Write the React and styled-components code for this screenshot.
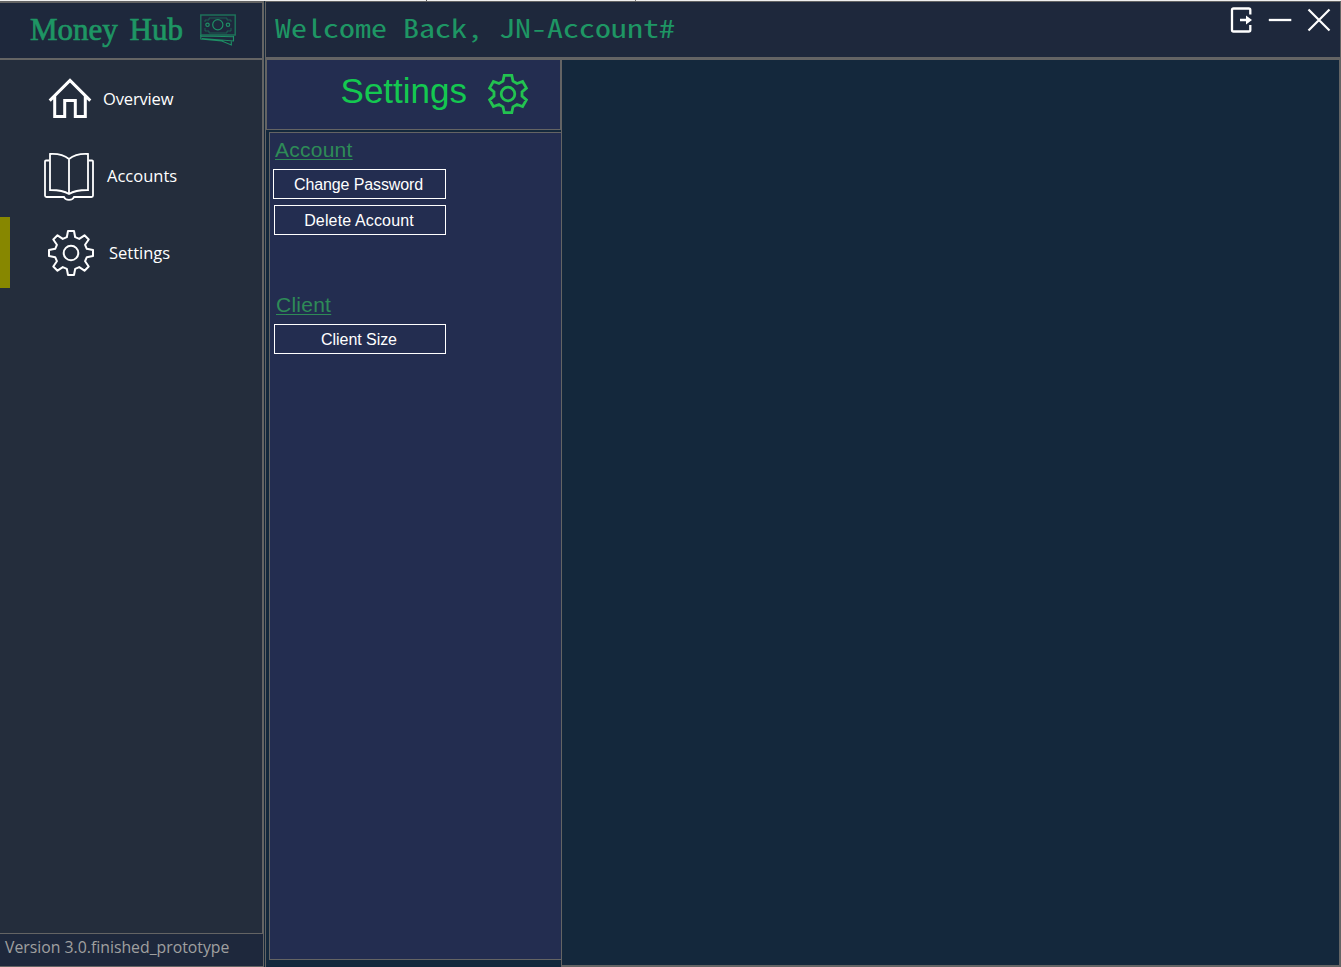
import React from "react";
import styled, { createGlobalStyle } from "styled-components";

const line = "#646464";

const GlobalStyle = createGlobalStyle`
  * { box-sizing: border-box; }
  body { margin: 0; background: #14283c; overflow: hidden; }
  svg { display: block; flex: none; }
`;

const Window = styled.div`
  width: 1341px;
  height: 967px;
  display: flex;
  padding-top: 1px;
  background:
    linear-gradient(#555, #555) 426px 0 / 1px 1px no-repeat,
    linear-gradient(#777, #777) 635px 0 / 1px 1px no-repeat,
    linear-gradient(#f0f0f0, #f0f0f0) 0 0 / 100% 1px no-repeat,
    #14283c;
`;

const Sidebar = styled.aside`
  width: 264px;
  flex: none;
  display: flex;
  flex-direction: column;
  background: #1e283c;
`;

const Brand = styled.header`
  height: 59px;
  display: flex;
  align-items: flex-start;
  padding: 11px 0 0 30px;
  background: #1e283c;
  border: 2px solid ${line};
  border-left: 0;
  color: #1e9664;
`;

const BrandName = styled.span`
  width: 170px;
  margin-top: -1px;
  font: 31px/34px "Liberation Serif", serif;
  word-spacing: 4px;
  white-space: nowrap;
  -webkit-text-stroke: 0.7px currentColor;
`;

const Nav = styled.nav`
  flex: 1;
  padding-top: 3px;
  background: #242d3c;
  border-right: 2px solid ${line};
`;

const NavItem = styled.a`
  height: 71px;
  margin-bottom: 6px;
  display: flex;
  align-items: center;
  border-left: 10px solid ${(p) => (p.$active ? "#878700" : "transparent")};
  padding-left: ${(p) => p.$inset}px;
  gap: ${(p) => p.$gap}px;
  color: #fff;
  font: 16.5px/24px "Open Sans", "Noto Sans", sans-serif;
`;

const NavLabel = styled.span`
  letter-spacing: ${(p) => p.$tracking}px;
`;

const Version = styled.footer`
  height: 34px;
  padding-left: 5px;
  border: 1px solid ${line};
  border-left: 0;
  color: #a0a0a0;
  font: 15.8px/27px "Open Sans", "Noto Sans", sans-serif;
  white-space: nowrap;
`;

const Workspace = styled.div`
  flex: 1;
  display: flex;
  flex-direction: column;
  margin-left: 1px;
  border-left: 1px solid ${line};
`;

const TitleBar = styled.header`
  height: 59px;
  flex: none;
  display: flex;
  justify-content: space-between;
  padding: 0 9px 0 9px;
  background: #1e283c;
  border-top: 1px solid ${line};
  border-right: 1px solid ${line};
  border-bottom: 3px solid ${line};
`;

const Welcome = styled.h1`
  margin: 0;
  color: #1e9664;
  font: 25px/50px "Noto Sans Mono CJK SC", "Liberation Mono", monospace;
  font-weight: 400;
  white-space: nowrap;
  transform: scaleX(1.28);
  transform-origin: left center;
`;

const WindowControls = styled.div`
  display: flex;
  align-items: flex-start;
  padding-top: 3px;
  gap: 15px;
`;

const Body = styled.div`
  flex: 1;
  min-height: 0;
  display: flex;
`;

const SettingsColumn = styled.div`
  width: 295px;
  flex: none;
  display: flex;
  flex-direction: column;
  padding-bottom: 7px;
`;

const SettingsHeader = styled.div`
  width: 295px;
  height: 70px;
  display: flex;
  align-items: flex-start;
  justify-content: flex-end;
  gap: 20px;
  padding: 13px 31px 0 0;
  background: #232d50;
  border: 1px solid ${line};
  border-top: 0;
  color: #14c850;
`;

const SettingsTitle = styled.h2`
  margin: 0;
  font: 400 35px/36px "Liberation Sans", sans-serif;
`;

const SettingsPanel = styled.div`
  flex: 1;
  margin: 2px 0 0 3px;
  padding: 4px 0 0 3px;
  background: #232d50;
  border: 1px solid ${line};
  border-right: 0;
`;

const Section = styled.section`
  height: 155px;
  display: flex;
  flex-direction: column;
  align-items: flex-start;
`;

const SectionTitle = styled.h3`
  margin: 0 0 6px ${(p) => p.$inset}px;
  color: #2e8b57;
  font: 400 21px/26px "Liberation Sans", sans-serif;
  letter-spacing: 0.25px;
  text-decoration: underline;
  text-decoration-thickness: 1px;
  text-underline-offset: 2px;
`;

const Button = styled.button`
  width: ${(p) => (p.$wide ? 173 : 172)}px;
  height: 30px;
  margin: 0 0 6px ${(p) => (p.$wide ? 0 : 1)}px;
  padding: 2px 2px 0 0;
  background: transparent;
  border: 1px solid #fff;
  color: #fff;
  font: 16px/26px "Liberation Sans", sans-serif;
  letter-spacing: ${(p) => p.$tracking || 0}px;
`;

const Content = styled.main`
  flex: 1;
  background: #14283c;
  border: solid ${line};
  border-width: 0 2px 2px 1px;
`;

const MoneyIcon = () => (
  <svg width="37" height="33" viewBox="0 0 37 33" fill="none" stroke="#1e8f65">
    <rect x=".8" y="1" width="34.4" height="20" strokeWidth="1.4" strokeOpacity=".75" />
    <path d="M5 8V6h4V4h18v2h4v2M5 14v3h4v2h18v-2h4v-3" strokeOpacity=".5" />
    <circle cx="17.8" cy="10.8" r="5.1" strokeWidth="1.2" />
    <circle cx="7.5" cy="10.8" r="1.7" strokeWidth="1.2" />
    <circle cx="28" cy="10.8" r="1.7" strokeWidth="1.2" />
    <path d="M.8 21v4l21 2 9.500 4V27.500M2 24.500l31.500 2.500v-5M1 22l33 .8" strokeWidth="1.1" />
  </svg>
);

const HomeIcon = () => (
  <svg width="44" height="42" viewBox="0 0 44 42" fill="none" stroke="#fff" strokeWidth="3">
    <path d="M1.7 22.6 22 2.4l20.3 20.2M6.7 18v20.500h10v-16h10.6v16h10V18" />
  </svg>
);

const BookIcon = () => (
  <svg width="50" height="50" viewBox="0 -1 50 50" fill="none" stroke="#fff" strokeWidth="1.8">
    <path d="M6 2c8-.5 14 1 19 5 5-4 11-5.500 19-5v36c-8-.1-14 .8-19 4-5-3.200-11-4.100-19-4V2ZM25 7v35" />
    <path d="M5.500 8.500H2Q1 8.500 1 9.500v34q0 1.500 1.500 1.500H20c1.300 3.700 8.700 3.700 10 0h17.500q1.500 0 1.500-1.500v-34q0-1-1-1h-3.500" />
  </svg>
);

const GearIcon = () => (
  <svg width="46" height="46" viewBox="0 0 46 46" fill="none" stroke="#fff" strokeWidth="2" strokeLinejoin="round">
    <path d="M20 1h6l1.200 6.200 4 1.700L36.500 5.300l4.200 4.200-3.600 5.300 1.700 4L45 20v6l-6.200 1.200-1.700 4 3.600 5.300-4.200 4.200-5.300-3.600-4 1.700L26 45h-6l-1.200-6.200-4-1.700-5.300 3.600-4.200-4.200 3.600-5.300-1.700-4L1 26v-6l6.200-1.200 1.700-4-3.600-5.300 4.200-4.200 5.300 3.600 4-1.700Z" />
    <circle cx="23" cy="23" r="7.300" />
  </svg>
);

const CogIcon = () => (
  <svg width="42" height="42" viewBox="0 0 42 42" fill="none" stroke="#23c350" strokeWidth="2.8">
    <path d="M17.200 2.400h7.600l1.200 5.800 4 2.300 5.600-2 3.800 6.600-4.400 3.900v4l4.400 3.900-3.800 6.600-5.600-2-4 2.300-1.200 5.800h-7.600L16 33.800l-4-2.300-5.600 2-3.800-6.600L7 23v-4l-4.400-3.900 3.800-6.600 5.600 2 4-2.300Z" />
    <circle cx="21" cy="21" r="6.800" />
  </svg>
);

const LogoutIcon = () => (
  <svg width="23" height="30" viewBox="0 0 23 30" fill="none" stroke="#fff" strokeWidth="2.300">
    <path d="M20.300 9.500V5q0-1.500-1.500-1.500H3.500Q2 3.500 2 5v20q0 1.500 1.500 1.500h15.300q1.500 0 1.500-1.500v-5M10 15h8" />
    <path d="m16 10.500 6 4.500-6 4.500Z" fill="#fff" stroke="none" />
  </svg>
);

const MinimizeIcon = () => (
  <svg width="24" height="30" viewBox="0 0 24 30" stroke="#fff" strokeWidth="2.300"><path d="M.8 15h22.500" /></svg>
);

const CloseIcon = () => (
  <svg width="24" height="30" viewBox="0 0 24 30" stroke="#fff" strokeWidth="2.200"><path d="m1.500 4.500 21 21m0-21-21 21" /></svg>
);

export default function App() {
  return (
    <>
      <GlobalStyle />
      <Window>
        <Sidebar>
          <Brand><BrandName>Money Hub</BrandName><MoneyIcon /></Brand>
          <Nav>
            <NavItem $inset={38} $gap={11}><HomeIcon /><NavLabel $tracking={-0.15}>Overview</NavLabel></NavItem>
            <NavItem $inset={34} $gap={13}><BookIcon /><NavLabel $tracking={0}>Accounts</NavLabel></NavItem>
            <NavItem $active $inset={38} $gap={15}><GearIcon /><NavLabel $tracking={0}>Settings</NavLabel></NavItem>
          </Nav>
          <Version>Version 3.0.finished_prototype</Version>
        </Sidebar>
        <Workspace>
          <TitleBar>
            <Welcome>Welcome Back, JN-Account#</Welcome>
            <WindowControls><LogoutIcon /><MinimizeIcon /><CloseIcon /></WindowControls>
          </TitleBar>
          <Body>
            <SettingsColumn>
              <SettingsHeader><SettingsTitle>Settings</SettingsTitle><CogIcon /></SettingsHeader>
              <SettingsPanel>
                <Section>
                  <SectionTitle $inset={2}>Account</SectionTitle>
                  <Button $wide $tracking={-0.12}>Change Password</Button>
                  <Button $tracking={0.15}>Delete Account</Button>
                </Section>
                <Section>
                  <SectionTitle $inset={3}>Client</SectionTitle>
                  <Button $tracking={-0.05}>Client Size</Button>
                </Section>
              </SettingsPanel>
            </SettingsColumn>
            <Content />
          </Body>
        </Workspace>
      </Window>
    </>
  );
}
